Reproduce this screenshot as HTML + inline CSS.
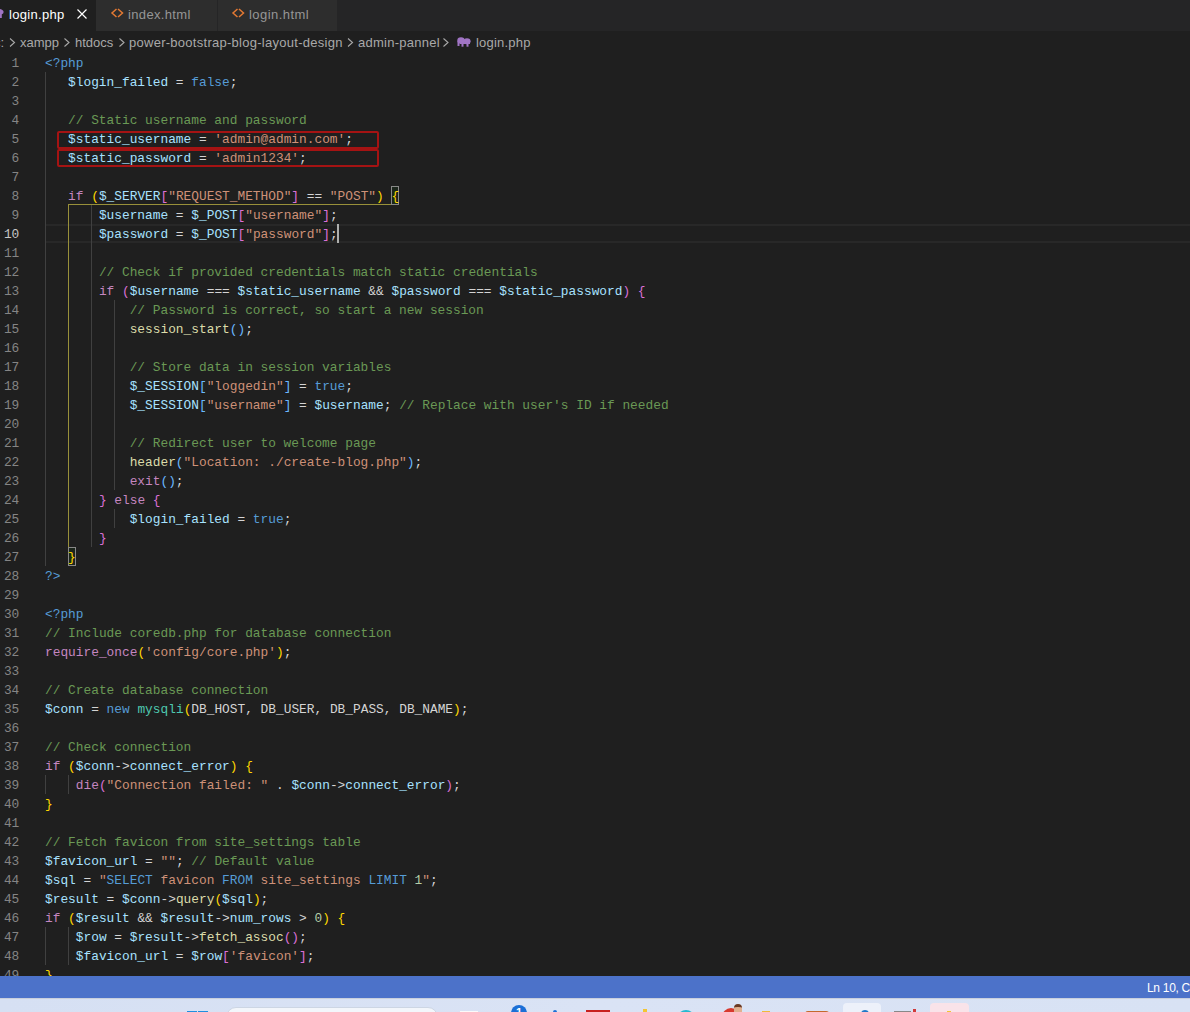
<!DOCTYPE html>
<html><head><meta charset="utf-8">
<style>
*{margin:0;padding:0;box-sizing:border-box}
html,body{width:1190px;height:1012px;overflow:hidden;background:#1f1f1f}
body{position:relative;font-family:"Liberation Sans",sans-serif}
.a{position:absolute}
#tabs{position:absolute;left:0;top:0;width:1190px;height:31px;background:#252526}
.tab{position:absolute;top:0;height:31px;background:#2d2d2d;color:#969696;font-size:13px;white-space:nowrap}
.tab.active{background:#1f1f1f;color:#fff}
.tab span{position:absolute;top:7px;letter-spacing:0.3px}
#crumbs{position:absolute;left:0;top:31px;width:1190px;height:22px;color:#a9a9a9;font-size:13px;white-space:nowrap}
#crumbs span{position:absolute;top:4px}
.ln{position:absolute;left:0;width:19.3px;text-align:right;height:19px;line-height:19px;font-family:"Liberation Mono",monospace;font-size:12.83px;color:#858585;padding-top:1px}
.ln.act{color:#c6c6c6}
.cl{position:absolute;height:19px;line-height:19px;white-space:pre;font-family:"Liberation Mono",monospace;font-size:12.83px;color:#d4d4d4;padding-top:1px}
.cl i{font-style:normal}
.v{color:#a8e2ff}.c{color:#6a9955}.s{color:#ce9178}.k{color:#c586c0}.b{color:#569cd6}
.f{color:#dcdcaa}.n{color:#b5cea8}.t{color:#4ec9b0}.y{color:#ffd700}.p{color:#da70d6}.u{color:#6ab8ff}
.g{position:absolute;width:1px;background:#404040}
.yg{position:absolute;background:#98903a}
.redbox{position:absolute;border:2px solid #a51313;border-radius:2px}
.bm{position:absolute;border:1px solid #888;background:rgba(0,100,0,0.1)}
#status{position:absolute;left:0;top:976px;width:1190px;height:22px;background:#4c72c9;color:#fff;font-size:12px;white-space:nowrap}
#taskbar{position:absolute;left:0;top:998px;width:1190px;height:14px;background:linear-gradient(90deg,#d6e0f3,#dae3f5 50%,#d8e2f4);border-top:1px solid #c9cfdc}
</style></head><body>
<div id="tabs">
  <div class="tab active" style="left:0;width:96px"><span style="left:9px">login.php</span>
    <svg class="a" style="left:0;top:0" width="96" height="31"><path d="M-4 8.6 Q3.6 8.6 3.6 12 Q3.6 13.8 1.8 14.2 L1.8 18 L-4 18 Z" fill="#a074c4"/><path d="M77.5 9.5 L86.5 18.5 M86.5 9.5 L77.5 18.5" stroke="#fff" stroke-width="1.2"/></svg>
  </div>
  <div class="tab" style="left:96px;width:121px"><span style="left:32px;letter-spacing:0.35px">index.html</span>
    <svg class="a" style="left:0;top:0" width="40" height="31"><path d="M20.5 9 L16 13 L20.5 17 M22 9 L26.5 13 L22 17" stroke="#e37933" stroke-width="1.5" fill="none"/></svg>
  </div>
  <div class="tab" style="left:218px;width:119px"><span style="left:31px;letter-spacing:0.45px">login.html</span>
    <svg class="a" style="left:0;top:0" width="40" height="31"><path d="M19.5 9 L15 13 L19.5 17 M21 9 L25.5 13 L21 17" stroke="#e37933" stroke-width="1.5" fill="none"/></svg>
  </div>
</div>
<div id="crumbs">
  <span style="left:-6px">c:</span>
  <span style="left:20px">xampp</span>
  <span style="left:75px">htdocs</span>
  <span style="left:129px;letter-spacing:0.27px">power-bootstrap-blog-layout-design</span>
  <span style="left:358px;letter-spacing:0.25px">admin-pannel</span>
  <span style="left:476px;letter-spacing:0.2px">login.php</span>
  <svg class="a" style="left:0;top:0" width="480" height="22"><g stroke="#a9a9a9" stroke-width="1.1" fill="none"><path d="M10 7.5 L14.5 11.5 L10 15.5"/><path d="M64.5 7.5 L69 11.5 L64.5 15.5"/><path d="M119.5 7.5 L124 11.5 L119.5 15.5"/><path d="M348 7.5 L352.5 11.5 L348 15.5"/><path d="M443.5 7.5 L448 11.5 L443.5 15.5"/></g>
  <g fill="#a074c4"><ellipse cx="461" cy="9.6" rx="3.7" ry="3.3"/><ellipse cx="467" cy="10.2" rx="3.6" ry="3"/><rect x="460" y="9" width="10" height="4"/><rect x="457.5" y="10" width="2" height="5"/><rect x="461.5" y="12" width="2" height="3.7"/><rect x="466.5" y="12" width="2" height="3.7"/></g></svg>
</div>
<div id="editor">
<div class="a" style="left:46px;top:224px;width:1144px;height:19px;border-top:2px solid #282828;border-bottom:2px solid #282828"></div>
<div class="g" style="left:45px;top:72px;height:494px"></div><div class="g" style="left:91px;top:205px;height:342px"></div><div class="g" style="left:114px;top:300px;height:190px"></div><div class="g" style="left:114px;top:509px;height:19px"></div><div class="g" style="left:45px;top:775px;height:19px"></div><div class="g" style="left:68px;top:775px;height:19px"></div><div class="g" style="left:45px;top:927px;height:38px"></div><div class="g" style="left:68px;top:927px;height:38px"></div>
<div class="yg" style="left:68px;top:204px;width:324px;height:1px"></div>
<div class="yg" style="left:68px;top:204px;width:1px;height:343px"></div>
<div class="bm" style="left:391px;top:186px;width:8px;height:19px"></div>
<div class="bm" style="left:68px;top:547px;width:8px;height:19px"></div>
<div class="redbox" style="left:57px;top:131px;width:322px;height:18px"></div>
<div class="redbox" style="left:57px;top:149px;width:322px;height:18px"></div>
<div class="ln" style="top:53px">1</div><div class="ln" style="top:72px">2</div><div class="ln" style="top:91px">3</div><div class="ln" style="top:110px">4</div><div class="ln" style="top:129px">5</div><div class="ln" style="top:148px">6</div><div class="ln" style="top:167px">7</div><div class="ln" style="top:186px">8</div><div class="ln" style="top:205px">9</div><div class="ln act" style="top:224px">10</div><div class="ln" style="top:243px">11</div><div class="ln" style="top:262px">12</div><div class="ln" style="top:281px">13</div><div class="ln" style="top:300px">14</div><div class="ln" style="top:319px">15</div><div class="ln" style="top:338px">16</div><div class="ln" style="top:357px">17</div><div class="ln" style="top:376px">18</div><div class="ln" style="top:395px">19</div><div class="ln" style="top:414px">20</div><div class="ln" style="top:433px">21</div><div class="ln" style="top:452px">22</div><div class="ln" style="top:471px">23</div><div class="ln" style="top:490px">24</div><div class="ln" style="top:509px">25</div><div class="ln" style="top:528px">26</div><div class="ln" style="top:547px">27</div><div class="ln" style="top:566px">28</div><div class="ln" style="top:585px">29</div><div class="ln" style="top:604px">30</div><div class="ln" style="top:623px">31</div><div class="ln" style="top:642px">32</div><div class="ln" style="top:661px">33</div><div class="ln" style="top:680px">34</div><div class="ln" style="top:699px">35</div><div class="ln" style="top:718px">36</div><div class="ln" style="top:737px">37</div><div class="ln" style="top:756px">38</div><div class="ln" style="top:775px">39</div><div class="ln" style="top:794px">40</div><div class="ln" style="top:813px">41</div><div class="ln" style="top:832px">42</div><div class="ln" style="top:851px">43</div><div class="ln" style="top:870px">44</div><div class="ln" style="top:889px">45</div><div class="ln" style="top:908px">46</div><div class="ln" style="top:927px">47</div><div class="ln" style="top:946px">48</div><div class="ln" style="top:965px">49</div>
<div class="cl" style="top:53px;left:45.00px"><i class="b">&lt;?php</i></div><div class="cl" style="top:72px;left:68.09px"><i class="v">$login_failed</i> = <i class="b">false</i>;</div><div class="cl" style="top:110px;left:68.09px"><i class="c">// Static username and password</i></div><div class="cl" style="top:129px;left:68.09px"><i class="v">$static_username</i> = <i class="s">'admin@admin.com'</i>;</div><div class="cl" style="top:148px;left:68.09px"><i class="v">$static_password</i> = <i class="s">'admin1234'</i>;</div><div class="cl" style="top:186px;left:68.09px"><i class="k">if</i> <i class="y">(</i><i class="v">$_SERVER</i><i class="p">[</i><i class="s">"REQUEST_METHOD"</i><i class="p">]</i> == <i class="s">"POST"</i><i class="y">)</i> <i class="y">{</i></div><div class="cl" style="top:205px;left:98.88px"><i class="v">$username</i> = <i class="v">$_POST</i><i class="p">[</i><i class="s">"username"</i><i class="p">]</i>;</div><div class="cl" style="top:224px;left:98.88px"><i class="v">$password</i> = <i class="v">$_POST</i><i class="p">[</i><i class="s">"password"</i><i class="p">]</i>;</div><div class="cl" style="top:262px;left:98.88px"><i class="c">// Check if provided credentials match static credentials</i></div><div class="cl" style="top:281px;left:98.88px"><i class="k">if</i> <i class="p">(</i><i class="v">$username</i> === <i class="v">$static_username</i> &amp;&amp; <i class="v">$password</i> === <i class="v">$static_password</i><i class="p">)</i> <i class="p">{</i></div><div class="cl" style="top:300px;left:129.67px"><i class="c">// Password is correct, so start a new session</i></div><div class="cl" style="top:319px;left:129.67px"><i class="f">session_start</i><i class="u">()</i>;</div><div class="cl" style="top:357px;left:129.67px"><i class="c">// Store data in session variables</i></div><div class="cl" style="top:376px;left:129.67px"><i class="v">$_SESSION</i><i class="u">[</i><i class="s">"loggedin"</i><i class="u">]</i> = <i class="b">true</i>;</div><div class="cl" style="top:395px;left:129.67px"><i class="v">$_SESSION</i><i class="u">[</i><i class="s">"username"</i><i class="u">]</i> = <i class="v">$username</i>; <i class="c">// Replace with user's ID if needed</i></div><div class="cl" style="top:433px;left:129.67px"><i class="c">// Redirect user to welcome page</i></div><div class="cl" style="top:452px;left:129.67px"><i class="f">header</i><i class="u">(</i><i class="s">"Location: ./create-blog.php"</i><i class="u">)</i>;</div><div class="cl" style="top:471px;left:129.67px"><i class="k">exit</i><i class="u">()</i>;</div><div class="cl" style="top:490px;left:98.88px"><i class="p">}</i> <i class="k">else</i> <i class="p">{</i></div><div class="cl" style="top:509px;left:129.67px"><i class="v">$login_failed</i> = <i class="b">true</i>;</div><div class="cl" style="top:528px;left:98.88px"><i class="p">}</i></div><div class="cl" style="top:547px;left:68.09px"><i class="y">}</i></div><div class="cl" style="top:566px;left:45.00px"><i class="b">?&gt;</i></div><div class="cl" style="top:604px;left:45.00px"><i class="b">&lt;?php</i></div><div class="cl" style="top:623px;left:45.00px"><i class="c">// Include coredb.php for database connection</i></div><div class="cl" style="top:642px;left:45.00px"><i class="k">require_once</i><i class="y">(</i><i class="s">'config/core.php'</i><i class="y">)</i>;</div><div class="cl" style="top:680px;left:45.00px"><i class="c">// Create database connection</i></div><div class="cl" style="top:699px;left:45.00px"><i class="v">$conn</i> = <i class="b">new</i> <i class="t">mysqli</i><i class="y">(</i>DB_HOST, DB_USER, DB_PASS, DB_NAME<i class="y">)</i>;</div><div class="cl" style="top:737px;left:45.00px"><i class="c">// Check connection</i></div><div class="cl" style="top:756px;left:45.00px"><i class="k">if</i> <i class="y">(</i><i class="v">$conn</i>-&gt;<i class="v">connect_error</i><i class="y">)</i> <i class="y">{</i></div><div class="cl" style="top:775px;left:75.79px"><i class="k">die</i><i class="p">(</i><i class="s">"Connection failed: "</i> . <i class="v">$conn</i>-&gt;<i class="v">connect_error</i><i class="p">)</i>;</div><div class="cl" style="top:794px;left:45.00px"><i class="y">}</i></div><div class="cl" style="top:832px;left:45.00px"><i class="c">// Fetch favicon from site_settings table</i></div><div class="cl" style="top:851px;left:45.00px"><i class="v">$favicon_url</i> = <i class="s">""</i>; <i class="c">// Default value</i></div><div class="cl" style="top:870px;left:45.00px"><i class="v">$sql</i> = <i class="s">"</i><i class="b">SELECT</i><i class="s"> favicon </i><i class="b">FROM</i><i class="s"> site_settings </i><i class="b">LIMIT</i><i class="s"> </i><i class="n">1</i><i class="s">"</i>;</div><div class="cl" style="top:889px;left:45.00px"><i class="v">$result</i> = <i class="v">$conn</i>-&gt;<i class="f">query</i><i class="y">(</i><i class="v">$sql</i><i class="y">)</i>;</div><div class="cl" style="top:908px;left:45.00px"><i class="k">if</i> <i class="y">(</i><i class="v">$result</i> &amp;&amp; <i class="v">$result</i>-&gt;<i class="v">num_rows</i> &gt; <i class="n">0</i><i class="y">)</i> <i class="y">{</i></div><div class="cl" style="top:927px;left:75.79px"><i class="v">$row</i> = <i class="v">$result</i>-&gt;<i class="f">fetch_assoc</i><i class="p">()</i>;</div><div class="cl" style="top:946px;left:75.79px"><i class="v">$favicon_url</i> = <i class="v">$row</i><i class="p">[</i><i class="s">'favicon'</i><i class="p">]</i>;</div><div class="cl" style="top:965px;left:45.00px"><i class="y">}</i></div>
<div class="a" style="left:337px;top:224px;width:2px;height:19px;background:#aeafad"></div>
</div>
<div id="status"><span style="position:absolute;left:1147px;top:5px;letter-spacing:-0.3px">Ln 10, Col 32</span></div>
<div id="taskbar">
  <div class="a" style="left:187px;top:12px;width:10px;height:4px;background:#1f8fe0"></div>
  <div class="a" style="left:198px;top:12px;width:10px;height:4px;background:#1f8fe0"></div>
  <div class="a" style="left:226px;top:8px;width:212px;height:20px;background:#f3f6fb;border-radius:10px;border:1px solid #cdd6e4"></div>
  <div class="a" style="left:460px;top:12px;width:18px;height:6px;background:#fafafa"></div>
  <div class="a" style="left:511px;top:6px;width:16px;height:16px;background:#1c6fd6;border-radius:8px;color:#fff;font-size:11px;font-weight:bold;text-align:center;line-height:14px">1</div>
  <div class="a" style="left:553px;top:11px;width:4px;height:4px;background:#1c6fd6;border-radius:2px"></div>
  <div class="a" style="left:586px;top:11px;width:24px;height:6px;background:#c8201e"></div>
  <div class="a" style="left:643px;top:10px;width:4px;height:6px;background:#f3c533"></div>
  <div class="a" style="left:677px;top:11px;width:18px;height:10px;background:#25b9d0;border-radius:9px 9px 0 0"></div>
  <div class="a" style="left:722px;top:9px;width:18px;height:10px;background:#d8392e;border-radius:9px 9px 0 0"></div>
  <div class="a" style="left:734px;top:5px;width:8px;height:9px;background:#e0b090;border-radius:4px 4px 0 0;border-top:3px solid #6a3a24"></div>
  <div class="a" style="left:762px;top:12px;width:8px;height:4px;background:#f0b93a"></div>
  <div class="a" style="left:805px;top:12px;width:24px;height:4px;background:#f0c8a0;border:2px solid #c5692d;border-bottom:none;border-radius:3px 3px 0 0"></div>
  <div class="a" style="left:843px;top:4px;width:38px;height:12px;background:#edf1fa;border-radius:4px"></div>
  <div class="a" style="left:861px;top:11px;width:8px;height:5px;background:#1f78c8;border-radius:4px 4px 0 0"></div>
  <div class="a" style="left:894px;top:12px;width:17px;height:6px;background:#d0d0d0;border-top:1px solid #888"></div>
  <div class="a" style="left:913px;top:10px;width:3px;height:6px;background:#d03a3a"></div>
  <div class="a" style="left:930px;top:4px;width:39px;height:12px;background:#f9e3e9;border-radius:4px"></div>
  <div class="a" style="left:947px;top:12px;width:4px;height:4px;background:#f3c533"></div>
  <div class="a" style="left:984px;top:13px;width:19px;height:4px;background:#2a6cc4"></div>
</div>
</body></html>
